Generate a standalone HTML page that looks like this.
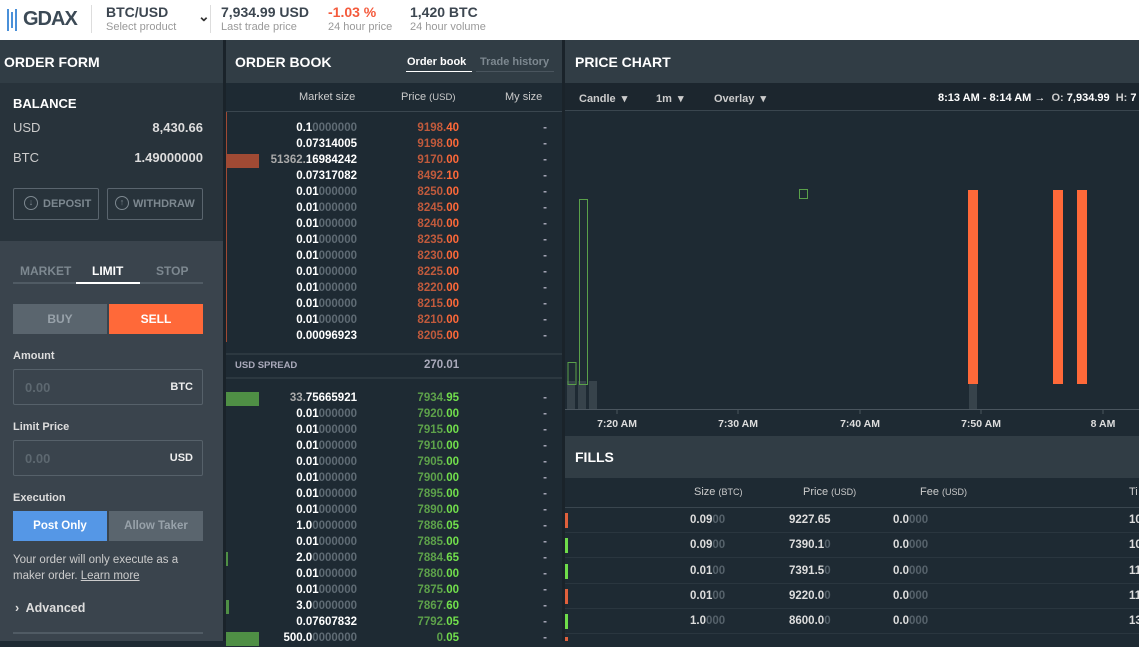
<!DOCTYPE html>
<html><head><meta charset="utf-8"><style>
*{margin:0;padding:0;box-sizing:border-box}
body{width:1139px;height:641px;overflow:hidden;background:#1e2a33;font-family:"Liberation Sans",sans-serif;color:#fff;position:relative;font-size:12px}
.a{position:absolute}
.b{font-weight:bold}
.top{left:0;top:0;width:1139px;height:40px;background:#fff;color:#333}
.hdr{background:#313d45;height:43px;top:40px}
.ht{font-weight:bold;font-size:14px;color:#fff;top:54px}
.ob .r{position:absolute;left:226px;width:338px;height:16px;font-size:11.5px;font-weight:bold}
.ms{position:absolute;right:207px;top:1px;color:#fff}
.ms i{font-style:normal;color:#5f6b74}
.pr{position:absolute;right:105px;top:1px}
.rd{color:#c05a3c}.rd i{font-style:normal;color:#ff6939}
.gr{color:#5da14a}.gr i{font-style:normal;color:#72e04c}
.my{position:absolute;right:17px;top:1px;color:#aab}
.bar{position:absolute;left:0;top:1px;height:14px}
.fr{position:absolute;left:565px;width:574px;height:25px;border-bottom:1px solid #2a363f;font-size:11.5px;font-weight:bold;color:#ddd}
.fr i{font-style:normal;color:#56626b}
</style></head><body>
<div class="a top">
 <div class="a" style="left:7px;top:9px;width:2px;height:22px;background:#4a90d9"></div>
 <div class="a" style="left:11px;top:12px;width:2px;height:16px;background:#4a90d9"></div>
 <div class="a" style="left:15px;top:9px;width:2px;height:22px;background:#4a90d9"></div>
 <div class="a b" style="left:23px;top:8px;font-size:20px;color:#3c4a56;letter-spacing:-1px">GDAX</div>
 <div class="a" style="left:91px;top:5px;width:1px;height:28px;background:#ddd"></div>
 <div class="a b" style="left:106px;top:4px;font-size:14px;color:#3c4650">BTC/USD</div>
 <div class="a" style="left:106px;top:21px;font-size:11px;color:#999">Select product</div>
 <div class="a b" style="left:198px;top:8px;font-size:14px;color:#333">&#8964;</div>
 <div class="a" style="left:210px;top:5px;width:1px;height:28px;background:#ddd"></div>
 <div class="a b" style="left:221px;top:4px;font-size:14px;color:#3c4650">7,934.99 USD</div>
 <div class="a" style="left:221px;top:21px;font-size:11px;color:#999">Last trade price</div>
 <div class="a b" style="left:328px;top:4px;font-size:14px;color:#f45a3c">-1.03 %</div>
 <div class="a" style="left:328px;top:21px;font-size:11px;color:#999">24 hour price</div>
 <div class="a b" style="left:410px;top:4px;font-size:14px;color:#3c4650">1,420 BTC</div>
 <div class="a" style="left:410px;top:21px;font-size:11px;color:#999">24 hour volume</div>
</div>
<!-- left panel -->
<div class="a" style="left:0;top:40px;width:223px;height:601px;background:#3a444d"></div>
<div class="a hdr" style="left:0;width:223px"></div>
<div class="a ht" style="left:4px">ORDER FORM</div>
<div class="a" style="left:0;top:83px;width:223px;height:158px;background:#28333b"></div>
<div class="a" style="left:223px;top:40px;width:3px;height:601px;background:#1a232a"></div>
<div class="a b" style="left:13px;top:96px;font-size:13px">BALANCE</div>
<div class="a" style="left:13px;top:120px;font-size:13px;color:#ccc">USD</div>
<div class="a b" style="right:936px;top:120px;font-size:13px;color:#ddd">8,430.66</div>
<div class="a" style="left:13px;top:150px;font-size:13px;color:#ccc">BTC</div>
<div class="a b" style="right:936px;top:150px;font-size:13px;color:#ddd">1.49000000</div>
<div class="a b" style="left:13px;top:188px;width:86px;height:32px;border:1px solid #5a656e;border-radius:2px;color:#7d8890;font-size:11px;padding:9px 0 0 29px">DEPOSIT</div>
<div class="a" style="left:24px;top:196px;width:14px;height:14px;border:1.5px solid #7d8890;border-radius:50%;font-size:9px;text-align:center;line-height:11px;color:#7d8890">↓</div>
<div class="a b" style="left:107px;top:188px;width:96px;height:32px;border:1px solid #5a656e;border-radius:2px;color:#7d8890;font-size:11px;padding:9px 0 0 25px">WITHDRAW</div>
<div class="a" style="left:115px;top:196px;width:14px;height:14px;border:1.5px solid #7d8890;border-radius:50%;font-size:9px;text-align:center;line-height:11px;color:#7d8890">↑</div>
<div class="a b" style="left:20px;top:264px;font-size:12px;color:#7d8890">MARKET</div>
<div class="a b" style="left:92px;top:264px;font-size:12px;color:#fff">LIMIT</div>
<div class="a b" style="left:156px;top:264px;font-size:12px;color:#7d8890">STOP</div>
<div class="a" style="left:13px;top:282px;width:190px;height:2px;background:#505b64"></div>
<div class="a" style="left:76px;top:282px;width:64px;height:2px;background:#fff"></div>
<div class="a b" style="left:13px;top:304px;width:94px;height:30px;background:#5a656e;color:#98a2aa;text-align:center;line-height:30px">BUY</div>
<div class="a b" style="left:109px;top:304px;width:94px;height:30px;background:#ff6939;color:#fff;text-align:center;line-height:30px">SELL</div>
<div class="a b" style="left:13px;top:350px;font-size:11px;color:#ddd">Amount</div>
<div class="a" style="left:13px;top:369px;width:190px;height:36px;border:1px solid #56616a;border-radius:2px"></div>
<div class="a b" style="left:25px;top:380px;font-size:13px;color:#5d6870">0.00</div>
<div class="a b" style="right:946px;top:381px;font-size:11px;color:#eee">BTC</div>
<div class="a b" style="left:13px;top:421px;font-size:11px;color:#ddd">Limit Price</div>
<div class="a" style="left:13px;top:440px;width:190px;height:36px;border:1px solid #56616a;border-radius:2px"></div>
<div class="a b" style="left:25px;top:451px;font-size:13px;color:#5d6870">0.00</div>
<div class="a b" style="right:946px;top:452px;font-size:11px;color:#eee">USD</div>
<div class="a b" style="left:13px;top:492px;font-size:11px;color:#ddd">Execution</div>
<div class="a b" style="left:13px;top:511px;width:94px;height:30px;background:#5597e6;color:#fff;text-align:center;line-height:30px;font-size:11.5px">Post Only</div>
<div class="a b" style="left:109px;top:511px;width:94px;height:30px;background:#5a656e;color:#98a2aa;text-align:center;line-height:30px;font-size:11.5px">Allow Taker</div>
<div class="a" style="left:13px;top:552px;font-size:11.5px;color:#ccc;line-height:16px;width:190px">Your order will only execute as a maker order. <u>Learn more</u></div>
<div class="a b" style="left:15px;top:601px;font-size:12.5px;color:#ddd">›&nbsp; Advanced</div>
<div class="a" style="left:13px;top:632px;width:190px;height:2px;background:#505b64"></div>
<!-- order book -->
<div class="a hdr" style="left:226px;width:338px"></div>
<div class="a ht" style="left:235px">ORDER BOOK</div>
<div class="a b" style="left:407px;top:56px;font-size:11px">Order book</div>
<div class="a" style="left:406px;top:71px;width:66px;height:1px;background:#fff"></div>
<div class="a b" style="left:480px;top:56px;font-size:11px;color:#7d8890">Trade history</div>
<div class="a" style="left:476px;top:71px;width:78px;height:1px;background:#4a555e"></div>
<div class="a" style="left:299px;top:91px;font-size:11px;color:#ccc">Market size</div>
<div class="a" style="left:401px;top:91px;font-size:11px;color:#ccc">Price <span style="font-size:9.5px">(USD)</span></div>
<div class="a" style="left:505px;top:91px;font-size:11px;color:#ccc">My size</div>
<div class="a" style="left:226px;top:111px;width:338px;height:1px;background:#3a464f"></div>
<div class="a" style="left:226px;top:112px;width:1px;height:230px;background:#a04a34"></div>
<div class="a ob" style="left:0;top:2px">
<div class="r" style="top:103px;height:8px;overflow:hidden"><span class="ms" style="top:-9px">0.07<i>000000</i></span><span class="pr rd" style="top:-9px">9200.<i>00</i></span></div>
<div class="r" style="top:119px"><span class="ms">0.1<i>0000000</i></span><span class="pr rd">9198.<i>40</i></span><span class="my">-</span></div>
<div class="r" style="top:135px"><span class="ms">0.07314005</span><span class="pr rd">9198.<i>00</i></span><span class="my">-</span></div>
<div class="r" style="top:151px"><div class="bar" style="width:33px;background:#a04a34"></div><span class="ms"><span style="color:#aaa">51362.</span>16984242</span><span class="pr rd">9170.<i>00</i></span><span class="my">-</span></div>
<div class="r" style="top:167px"><span class="ms">0.07317082</span><span class="pr rd">8492.<i>10</i></span><span class="my">-</span></div>
<div class="r" style="top:183px"><span class="ms">0.01<i>000000</i></span><span class="pr rd">8250.<i>00</i></span><span class="my">-</span></div>
<div class="r" style="top:199px"><span class="ms">0.01<i>000000</i></span><span class="pr rd">8245.<i>00</i></span><span class="my">-</span></div>
<div class="r" style="top:215px"><span class="ms">0.01<i>000000</i></span><span class="pr rd">8240.<i>00</i></span><span class="my">-</span></div>
<div class="r" style="top:231px"><span class="ms">0.01<i>000000</i></span><span class="pr rd">8235.<i>00</i></span><span class="my">-</span></div>
<div class="r" style="top:247px"><span class="ms">0.01<i>000000</i></span><span class="pr rd">8230.<i>00</i></span><span class="my">-</span></div>
<div class="r" style="top:263px"><span class="ms">0.01<i>000000</i></span><span class="pr rd">8225.<i>00</i></span><span class="my">-</span></div>
<div class="r" style="top:279px"><span class="ms">0.01<i>000000</i></span><span class="pr rd">8220.<i>00</i></span><span class="my">-</span></div>
<div class="r" style="top:295px"><span class="ms">0.01<i>000000</i></span><span class="pr rd">8215.<i>00</i></span><span class="my">-</span></div>
<div class="r" style="top:311px"><span class="ms">0.01<i>000000</i></span><span class="pr rd">8210.<i>00</i></span><span class="my">-</span></div>
<div class="r" style="top:327px"><span class="ms">0.00096923</span><span class="pr rd">8205.<i>00</i></span><span class="my">-</span></div>
</div>
<div class="a" style="left:226px;top:353px;width:336px;height:2px;background:#2c3840"></div>
<div class="a b" style="left:235px;top:360px;font-size:9.5px;color:#aab">USD SPREAD</div>
<div class="a b" style="left:424px;top:359px;font-size:11.5px;color:#aab">270.01</div>
<div class="a" style="left:226px;top:377px;width:336px;height:2px;background:#2c3840"></div>
<div class="a ob" style="left:0;top:2px">
<div class="r" style="top:389px"><div class="bar" style="width:33px;background:#4f8f45"></div><span class="ms"><span style="color:#aaa">33.</span>75665921</span><span class="pr gr">7934.<i>95</i></span><span class="my">-</span></div>
<div class="r" style="top:405px"><span class="ms">0.01<i>000000</i></span><span class="pr gr">7920.<i>00</i></span><span class="my">-</span></div>
<div class="r" style="top:421px"><span class="ms">0.01<i>000000</i></span><span class="pr gr">7915.<i>00</i></span><span class="my">-</span></div>
<div class="r" style="top:437px"><span class="ms">0.01<i>000000</i></span><span class="pr gr">7910.<i>00</i></span><span class="my">-</span></div>
<div class="r" style="top:453px"><span class="ms">0.01<i>000000</i></span><span class="pr gr">7905.<i>00</i></span><span class="my">-</span></div>
<div class="r" style="top:469px"><span class="ms">0.01<i>000000</i></span><span class="pr gr">7900.<i>00</i></span><span class="my">-</span></div>
<div class="r" style="top:485px"><span class="ms">0.01<i>000000</i></span><span class="pr gr">7895.<i>00</i></span><span class="my">-</span></div>
<div class="r" style="top:501px"><span class="ms">0.01<i>000000</i></span><span class="pr gr">7890.<i>00</i></span><span class="my">-</span></div>
<div class="r" style="top:517px"><span class="ms">1.0<i>0000000</i></span><span class="pr gr">7886.<i>05</i></span><span class="my">-</span></div>
<div class="r" style="top:533px"><span class="ms">0.01<i>000000</i></span><span class="pr gr">7885.<i>00</i></span><span class="my">-</span></div>
<div class="r" style="top:549px"><div class="bar" style="width:2px;background:#4f8f45"></div><span class="ms">2.0<i>0000000</i></span><span class="pr gr">7884.<i>65</i></span><span class="my">-</span></div>
<div class="r" style="top:565px"><span class="ms">0.01<i>000000</i></span><span class="pr gr">7880.<i>00</i></span><span class="my">-</span></div>
<div class="r" style="top:581px"><span class="ms">0.01<i>000000</i></span><span class="pr gr">7875.<i>00</i></span><span class="my">-</span></div>
<div class="r" style="top:597px"><div class="bar" style="width:3px;background:#4f8f45"></div><span class="ms">3.0<i>0000000</i></span><span class="pr gr">7867.<i>60</i></span><span class="my">-</span></div>
<div class="r" style="top:613px"><span class="ms">0.07607832</span><span class="pr gr">7792.<i>05</i></span><span class="my">-</span></div>
<div class="r" style="top:629px"><div class="bar" style="width:33px;background:#4f8f45"></div><span class="ms">500.0<i>0000000</i></span><span class="pr gr">0.<i>05</i></span><span class="my">-</span></div>
</div>
<!-- chart -->
<div class="a" style="left:562px;top:40px;width:3px;height:601px;background:#1a232a"></div>
<div class="a hdr" style="left:565px;width:574px"></div>
<div class="a ht" style="left:575px">PRICE CHART</div>
<div class="a" style="left:565px;top:83px;width:574px;height:28px;background:#1c262e;border-bottom:1px solid #3a464f"></div>
<div class="a b" style="left:579px;top:92px;font-size:11px;color:#ccc">Candle &nbsp;▾</div>
<div class="a b" style="left:656px;top:92px;font-size:11px;color:#ccc">1m &nbsp;▾</div>
<div class="a b" style="left:714px;top:92px;font-size:11px;color:#ccc">Overlay &nbsp;▾</div>
<div class="a b" style="left:938px;top:92px;font-size:11px;color:#fff;white-space:nowrap">8:13 AM - 8:14 AM → &nbsp;<span style="color:#ccc">O:</span> 7,934.99 &nbsp;<span style="color:#ccc">H:</span> 7</div>
<svg class="a" style="left:565px;top:111px" width="574" height="325">
 <rect x="2" y="270" width="8" height="29" fill="#37434b"/>
 <rect x="13" y="270" width="8" height="29" fill="#37434b"/>
 <rect x="24" y="270" width="8" height="29" fill="#37434b"/>
 <rect x="3" y="251.5" width="8" height="22" fill="none" stroke="#5aa04a"/>
 <rect x="14.5" y="88.5" width="8" height="185" fill="none" stroke="#5aa04a"/>
 <rect x="234.5" y="78.5" width="8" height="9" fill="none" stroke="#5aa04a"/>
 <rect x="404" y="273" width="8" height="26" fill="#37434b"/>
 <rect x="403" y="79" width="10" height="194" fill="#ff6939"/>
 <rect x="488" y="79" width="10" height="194" fill="#ff6939"/>
 <rect x="512" y="79" width="10" height="194" fill="#ff6939"/>
 <line x1="0" y1="298.5" x2="574" y2="298.5" stroke="#4a555e"/>
 <g stroke="#4a555e"><line x1="52" y1="298" x2="52" y2="303"/><line x1="173" y1="298" x2="173" y2="303"/><line x1="295" y1="298" x2="295" y2="303"/><line x1="416" y1="298" x2="416" y2="303"/><line x1="538" y1="298" x2="538" y2="303"/></g>
 <g fill="#ddd" font-size="10.5" font-weight="bold" font-family="Liberation Sans" text-anchor="middle">
 <text x="52" y="316">7:20 AM</text><text x="173" y="316">7:30 AM</text><text x="295" y="316">7:40 AM</text><text x="416" y="316">7:50 AM</text><text x="538" y="316">8 AM</text></g>
</svg>
<div class="a" style="left:565px;top:436px;width:574px;height:42px;background:#313d45"></div>
<div class="a ht" style="left:575px;top:449px">FILLS</div>
<div class="a" style="left:565px;top:478px;width:574px;height:30px;border-bottom:1px solid #3a464f"></div>
<div class="a" style="left:694px;top:486px;font-size:11px;color:#ccc">Size <span style="font-size:9px">(BTC)</span></div>
<div class="a" style="left:803px;top:486px;font-size:11px;color:#ccc">Price <span style="font-size:9px">(USD)</span></div>
<div class="a" style="left:920px;top:486px;font-size:11px;color:#ccc">Fee <span style="font-size:9px">(USD)</span></div>
<div class="a" style="left:1129px;top:486px;font-size:11px;color:#ccc">Ti</div>
<div class="fr" style="top:508px"><div class="a" style="left:0;top:5px;width:3px;height:15px;background:#e0603c"></div><span class="a" style="left:125px;top:6px">0.09<i>00</i></span><span class="a" style="left:224px;top:6px">9227.65</span><span class="a" style="left:328px;top:6px">0.0<i>000</i></span><span class="a" style="left:564px;top:6px">10</span></div>
<div class="fr" style="top:533px"><div class="a" style="left:0;top:5px;width:3px;height:15px;background:#6fdc4a"></div><span class="a" style="left:125px;top:6px">0.09<i>00</i></span><span class="a" style="left:224px;top:6px">7390.1<i>0</i></span><span class="a" style="left:328px;top:6px">0.0<i>000</i></span><span class="a" style="left:564px;top:6px">10</span></div>
<div class="fr" style="top:559px"><div class="a" style="left:0;top:5px;width:3px;height:15px;background:#6fdc4a"></div><span class="a" style="left:125px;top:6px">0.01<i>00</i></span><span class="a" style="left:224px;top:6px">7391.5<i>0</i></span><span class="a" style="left:328px;top:6px">0.0<i>000</i></span><span class="a" style="left:564px;top:6px">11</span></div>
<div class="fr" style="top:584px"><div class="a" style="left:0;top:5px;width:3px;height:15px;background:#e0603c"></div><span class="a" style="left:125px;top:6px">0.01<i>00</i></span><span class="a" style="left:224px;top:6px">9220.0<i>0</i></span><span class="a" style="left:328px;top:6px">0.0<i>000</i></span><span class="a" style="left:564px;top:6px">11</span></div>
<div class="fr" style="top:609px"><div class="a" style="left:0;top:5px;width:3px;height:15px;background:#6fdc4a"></div><span class="a" style="left:125px;top:6px">1.0<i>000</i></span><span class="a" style="left:224px;top:6px">8600.0<i>0</i></span><span class="a" style="left:328px;top:6px">0.0<i>000</i></span><span class="a" style="left:564px;top:6px">13</span></div>
<div class="a" style="left:565px;top:637px;width:3px;height:4px;background:#e0603c"></div>
</body></html>
